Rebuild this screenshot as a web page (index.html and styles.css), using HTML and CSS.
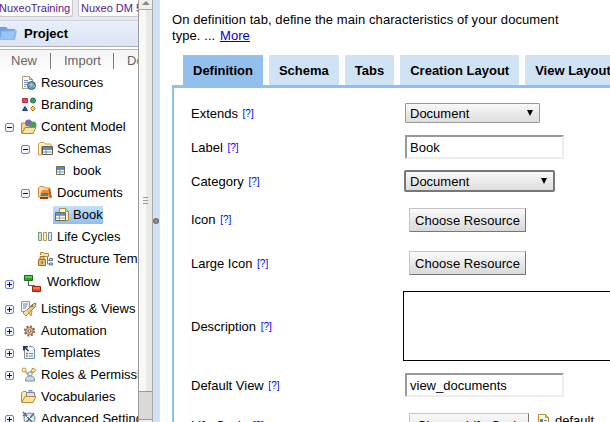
FILE: index.html
```html
<!DOCTYPE html>
<html lang="en">
<head>
<meta charset="utf-8">
<title>Nuxeo Studio</title>
<link rel="stylesheet" href="styles.css">
</head>
<body>
<div class="app">
  <aside class="sidebar">
    <div class="bookmarks"><span class="mark first">NuxeoTraining</span><span class="mark second">Nuxeo DM 5.4</span></div>
    <div class="project">
      <svg width="18" height="16" viewBox="0 0 18 16"><path d="M0 1h6l2 2h7v9H0z" fill="#6f9fdc"/><path d="M1 5l14-1 2 1-2 9H0z" fill="#8bb8ef"/><path d="M2 6l13-1-2 8H1z" fill="#9cc4f4"/></svg>
      <span>Project</span>
    </div>
    <div class="toolbar"><span class="tool new">New</span><span class="tool import">Import</span><span class="tool del">Delete</span></div>
    <ul class="tree">
      <li class="l1"><i class="tog"></i><svg class="ic" viewBox="0 0 16 16"><path d="M1.500 1.500h7l3 3v9h-10z" fill="#fffdf0" stroke="#a6a383"/><path d="M8.500 1.500v3h3M3 5.500h4M3 7.500h4M3 9.500h3M3 11.500h2" fill="none" stroke="#7792bd"/><circle cx="10.500" cy="10.500" r="4" fill="#659cce" stroke="#355c83"/><path d="M8 9l3-1 1 2-2 2zM12 12l2-2v2z" fill="#a9c98d"/></svg><span>Resources</span></li>
      <li class="l1"><i class="tog"></i><svg class="ic" viewBox="0 0 16 16"><path d="M1.500 1.500h5v4h-5z" fill="#e7455d" stroke="#b92e42"/><circle cx="12" cy="3.500" r="2.500" fill="#459a65" stroke="#246942"/><path d="M4 9.500l2.500 4h-5z" fill="#245baf" stroke="#203f72"/><path d="M12 9l2.500 2.500L12 14l-2.500-2.500z" fill="#ffc84e" stroke="#b67e1d"/></svg><span>Branding</span></li>
      <li class="l1"><i class="tog minus"></i><svg class="ic" viewBox="0 0 16 16"><path d="M.5 14V4h4l2 2h6v8z" fill="#f5d488" stroke="#b88637"/><circle cx="7.500" cy="4" r="3.500" fill="#7770a5"/><circle cx="12" cy="6" r="3.500" fill="#4b9b5e"/><path d="M1 14.500l3-6h11l-3 6z" fill="#fae2a5" stroke="#b88637"/></svg><span>Content Model</span></li>
      <li class="l2"><i class="tog minus"></i><svg class="ic" viewBox="0 0 16 16"><path d="M1.500 14V3L3 1.500h4L8.500 3H14v3" fill="#fff2ca" stroke="#d59b43"/><path d="M1.500 14h3V5" fill="none" stroke="#d59b43"/><path d="M5.500 5.500h10v8h-10z" fill="#fff" stroke="#625e46"/><path d="M6 6h9v2H6z" fill="#568bd2"/><path d="M6 8.500h9M6 11h9M9 8v5" stroke="#668fb8"/></svg><span>Schemas</span></li>
      <li class="l3"><svg class="ic" viewBox="0 0 16 16"><path d="M3.500 3.500h8v8h-8z" fill="#fff" stroke="#6e6b4c"/><path d="M4 4h7v2H4z" fill="#518fd1"/><path d="M4 6.500h7M4 9h7M7 6v5" stroke="#7095b9"/></svg><span>book</span></li>
      <li class="l2"><i class="tog minus"></i><svg class="ic" viewBox="0 0 16 16"><path d="M1.500 12V3L3 1.500h3.500L8 3h5v9z" fill="#ffe1a5" stroke="#cf8634"/><path d="M5 5h6l2 6H3z" fill="#f18a32"/><path d="M4 8h7v3H4z" fill="#388996"/><path d="M3 12h8v2H3z" fill="#953b26"/><path d="M12 4l2 9" stroke="#b55a23" stroke-width="2"/></svg><span>Documents</span></li>
      <li class="l3"><span class="selected"><svg class="ic" viewBox="0 0 16 16"><path d="M5.500 6V1.500h6l3 3v9h-4" fill="#fff6cc" stroke="#b49142"/><path d="M11.500 1.500v3h3" fill="none" stroke="#b49142"/><path d="M1.500 5.500h10v8h-10z" fill="#fff" stroke="#6e6d54"/><path d="M2 6h9v2H2z" fill="#5c91d2"/><path d="M2 8.500h9M2 11h9M5.500 8v5" stroke="#8c9eab"/></svg><span>Book</span></span></li>
      <li class="l2"><i class="tog"></i><svg class="ic" viewBox="0 0 16 16"><path d="M1.500 3.500h3v8h-3z" fill="#d5e9ce" stroke="#77996d"/><path d="M6.500 3.500h3v8h-3z" fill="#fff0bc" stroke="#b29a5a"/><path d="M11.500 3.500h3v8h-3z" fill="#dce9fa" stroke="#768eae"/></svg><span>Life Cycles</span></li>
      <li class="l2"><i class="tog"></i><svg class="ic" viewBox="0 0 16 16"><path d="M3.500 4V1.500h3l1 1h4v3h-6" fill="#ffe29a" stroke="#bd8130"/><path d="M1.500 8.500h7v6h-7zM3 8V5.500h4V8" fill="#e8bf73" stroke="#a46c27"/><path d="M5 10v3" stroke="#7b5019"/><path d="M10.500 6v7h3M10 9.500h3" fill="none" stroke="#6a82a6"/><path d="M12.500 7.500h3v2h-3zM12.500 12h3v2h-3z" fill="#d5e4f5" stroke="#55739c"/></svg><span>Structure Templates</span></li>
      <li class="l1 workflow"><i class="tog plus"></i><svg class="flow" width="20" height="20" viewBox="0 0 20 20"><path d="M5.500 7v4.500h6v3" fill="none" stroke="#555"/><path d="M1.500 1.500h8v5h-8z" fill="#27a927" stroke="#176b1b"/><path d="M2 2h7v2H2z" fill="#62c957"/><path d="M9.500 12.500h8v5h-8z" fill="#fa3e20" stroke="#9c2014"/><path d="M10 13h7v2h-7z" fill="#ff7453"/></svg><span>Workflow</span></li>
      <li class="l1"><i class="tog plus"></i><svg class="ic" viewBox="0 0 16 16"><path d="M.5.500h8v10h-8z" fill="#edf4fc" stroke="#8299b5"/><path d="M2 3h5M2 5h4M2 7h3" stroke="#718aad"/><path d="M5 10l7-7 3-1-1 4-6 6z" fill="#f0ca80" stroke="#a88042"/><path d="M5 9l-3 3 3 3 3-3M8 12l2 3 1-5" fill="#f7dca3" stroke="#b38b50"/><circle cx="11" cy="5" r="1.200" fill="#5579ab"/></svg><span>Listings &amp; Views</span></li>
      <li class="l1"><i class="tog plus"></i><svg class="ic" viewBox="0 0 16 16"><circle cx="8.500" cy="8" r="4.600" fill="none" stroke="#866347" stroke-width="2" stroke-dasharray="2 1.600"/><circle cx="8.500" cy="8" r="3.600" fill="#ddc69c" stroke="#9b7552"/><circle cx="8.500" cy="8" r="1.400" fill="#fff" stroke="#806147"/></svg><span>Automation</span></li>
      <li class="l1"><i class="tog plus"></i><svg class="ic" viewBox="0 0 16 16"><path d="M3.500 5V13.500h10v-10L11.500 1.500H8" fill="#f2f6fb" stroke="#7790ad"/><path d="M2 1h5v1.500H5l3 3-1 1-3-3v2H2z" fill="#24364f"/><path d="M5 8.500h2M5 11h2" stroke="#d25c52" stroke-width="1.500"/><path d="M8 8.500h4M8 11h4" stroke="#479d88"/></svg><span>Templates</span></li>
      <li class="l1"><i class="tog plus"></i><svg class="ic" viewBox="0 0 16 16"><circle cx="3" cy="3" r="2" fill="#fff3b2" stroke="#c79835"/><path d="M4.500 4.500L9 10M11 4L6 8" stroke="#c7a14b" stroke-width="1.500"/><path d="M12 1l3 2.500-3 2.500-2-2.500z" fill="#ffe59a" stroke="#bd892c"/><circle cx="9" cy="7" r="2.200" fill="#e5edf5" stroke="#8297b0"/><path d="M4.500 14c0-4 2-5 5-5s4 2 4 5z" fill="#cbdced" stroke="#748fae"/></svg><span>Roles &amp; Permissions</span></li>
      <li class="l1"><i class="tog"></i><svg class="ic" viewBox="0 0 16 16"><path d="M.5 13V4L2 2.500h3L7 4.500h5V13z" fill="#ffe7a9" stroke="#bd8b38"/><path d="M5.500 8V3.500h8V8M8 3V1.500h3V3" fill="#d7e1ef" stroke="#7487a7"/><path d="M1 13.500l3-6h11l-3 6z" fill="#fae4a5" stroke="#bd8b38"/></svg><span>Vocabularies</span></li>
      <li class="l1"><i class="tog plus"></i><svg class="ic" viewBox="0 0 16 16"><circle cx="8.500" cy="7.500" r="5.500" fill="#d9e8f0" stroke="#668296"/><path d="M2 1l10 11M13 2L5 12M5 2l-3 3" stroke="#516d84" stroke-width="1.500"/><path d="M4 8l3-3 5 5" fill="none" stroke="#fff"/></svg><span>Advanced Settings</span></li>
    </ul>
  </aside>
  <div class="scrollbar"><div class="up"></div><div class="thumb"><b></b></div><div class="track"></div><div class="down"></div></div>
  <div class="splitter"><i></i></div>
  <main class="content">
    <p class="intro">On definition tab, define the main characteristics of your document<br>type. ... <a href="#">More</a></p>
    <nav class="tabs"><span class="tab active">Definition</span><span class="tab">Schema</span><span class="tab">Tabs</span><span class="tab">Creation Layout</span><span class="tab">View Layout</span></nav>
    <section class="panel">
      <div class="row"><label>Extends <a>[?]</a></label><div class="select">Document<i></i></div></div>
      <div class="row"><label>Label <a>[?]</a></label><div class="input">Book</div></div>
      <div class="row"><label>Category <a>[?]</a></label><div class="select focus">Document<i></i></div></div>
      <div class="row icon"><label>Icon <a>[?]</a></label><div class="button">Choose Resource</div></div>
      <div class="row large"><label>Large Icon <a>[?]</a></label><div class="button">Choose Resource</div></div>
      <div class="row desc"><label>Description <a>[?]</a></label><div class="textarea"></div></div>
      <div class="row view"><label>Default View <a>[?]</a></label><div class="input">view_documents</div></div>
      <div class="row cycle"><label>Life Cycle <a>[?]</a></label><div class="button wide">Choose Life Cycle</div><div class="current"><svg width="12" height="14" viewBox="0 0 12 14"><path d="M.5.500h7l3 3v10H.5z" fill="#fff8dc" stroke="#b5933d"/><path d="M7.500.5v3h3" fill="#ecc76e" stroke="#b5933d"/><path d="M2 5h3v3H2zM2 10h3v2H2z" fill="#5680c0"/><path d="M6 6.500h3M6 11h3" stroke="#6d87ae"/></svg><span>default</span></div></div>
    </section>
  </main>
</div>
</body>
</html>
```
FILE: styles.css
```css
* { box-sizing: border-box; }
body { margin: 0; overflow: hidden; background: #fff; color: #000; font: 13px/16px "Liberation Sans", Arial, sans-serif; }
.app { display: flex; width: 610px; height: 422px; overflow: hidden; }
svg { flex: none; display: block; }

.sidebar { width: 138px; flex: none; overflow: hidden; white-space: nowrap; }
.bookmarks { display: flex; gap: 5px; height: 21px; background: #e9eaf0; font-size: 11px; color: #551a8b; border-bottom: 1px solid #d4d4da; }
.mark { height: 17px; background: #fff; border: 1px solid #c8c8d4; border-top: 0; border-radius: 0 0 3px 3px; flex: none; }
.mark.first { width: 74px; margin-left: -1px; text-indent: -1px; }
.mark.second { width: 80px; padding-left: 2px; }
.project { display: flex; align-items: center; height: 26px; background: linear-gradient(#e9effb, #dbe4f5); border-bottom: 1px solid #b0b0b5; font-weight: bold; }
.project span { margin: 1px 0 0 6px; }
.toolbar { display: flex; align-items: center; height: 25px; margin-top: 2px; padding-bottom: 2px; border-top: 1px solid #b4b4b4; background: linear-gradient(#f4f4f4, #fff); color: #666; }
.tool { height: 16px; flex: none; }
.tool.new { width: 51px; padding-left: 11px; border-right: 1px solid #777; }
.tool.import { width: 63px; padding-left: 13px; border-right: 1px solid #777; }
.tool.del { padding-left: 13px; }

.tree { list-style: none; margin: -2px 0 0; padding: 0; }
.tree li { display: flex; align-items: center; height: 22px; }
.tree .l1 { padding-left: 5px; }
.tree .l2 { padding-left: 21px; }
.tree .l3 { padding-left: 53px; }
.tog { width: 9px; height: 9px; margin-right: 7px; flex: none; }
.tog.minus, .tog.plus { border: 1px solid #7186bd; border-radius: 2px; background: linear-gradient(#0000c8, #0000c8) center / 5px 1px no-repeat, #eef3ff; }
.tog.plus { background: linear-gradient(#0000c8, #0000c8) center / 5px 1px no-repeat, linear-gradient(#0000c8, #0000c8) center / 1px 5px no-repeat, #eef3ff; }
.ic { width: 16px; height: 16px; margin-right: 4px; }
.selected { display: flex; align-items: center; width: 50px; height: 18px; padding-left: 1px; background: linear-gradient(#c5e0fb, #91beee); }
.selected .ic { margin-right: 3px; }
.tree .workflow { height: 28px; }
.workflow .flow { margin: 0 3px 0 2px; }
.workflow span { margin: 0 0 5px 1px; }

.scrollbar { display: flex; flex-direction: column; width: 15px; flex: none; border-left: 1px solid #9b9b9b; border-right: 1px solid #aaa; background: #ddd; }
.up { height: 10px; border-bottom: 1px solid #aaa; background: #f1f0ee; }
.up::before { content: ""; display: block; width: 0; margin: 1px 0 0 3px; border: 4px solid transparent; border-top: 0; border-bottom-color: #888; }
.thumb { display: flex; justify-content: center; align-items: center; height: 381px; padding-right: 1px; background: linear-gradient(90deg, #f8f8f7 50%, #ebe9e8 50%); }
.thumb b { width: 5px; height: 7px; border: solid #999; border-width: 1px 0; background: linear-gradient(#999, #999) center / 5px 1px no-repeat; }
.track { height: 29px; border: solid #999; border-width: 1px 0; background: #dcdad9; }
.down { flex: 1; background: #f1f0ee; }
.splitter { display: flex; align-items: center; width: 7px; flex: none; background: #d0e3f5; }
.splitter i { width: 6px; height: 6px; margin-top: 20px; border-radius: 50%; background: radial-gradient(#999, #555); }

.content { flex: none; width: 500px; padding-left: 12px; white-space: nowrap; }
.intro { height: 55px; margin: 0; padding-top: 12px; letter-spacing: .075px; }
.intro a { margin-left: 1px; color: #0000cd; text-decoration: underline; }
.tabs { display: flex; gap: 6px; padding-left: 11px; height: 30px; font-weight: bold; }
.tab { padding: 8px 10px 0; background: #d0e3f5; }
.tab.active { background: #92bfee; }
.panel { border: solid #92bfee; border-width: 3px 0 0 2px; padding: 8px 0 0 17px; height: 360px; }
.row { display: flex; align-items: center; height: 34px; }
.row label { width: 214px; flex: none; padding-top: 2px; }
.row label a { margin-left: 1px; color: #00f; font-size: 10px; position: relative; top: -1px; }
.select { display: flex; align-items: center; width: 135px; height: 20px; padding: 1px 5px 0 4px; border: 1px solid #999; border-radius: 1px; background: linear-gradient(#f8f8f8, #ddd); }
.select i { margin: -1px 1px 0 auto; border: solid transparent; border-width: 6px 3px 0; border-top-color: #000; }
.select.focus { width: 151px; height: 22px; margin-left: -1px; border: 2px solid #777; border-radius: 2px; }
.input { width: 159px; height: 24px; padding: 3px 3px 0; border: 2px solid; border-color: #999 #eee #eee #999; }
.button { width: 117px; height: 24px; margin-left: 4px; padding: 4px 5px; border: 1px solid; border-color: #c5c5c5 #777 #777 #c5c5c5; background: linear-gradient(#fafafa, #d9d9d9); letter-spacing: .06px; }
.button.wide { width: 120px; padding-left: 7px; flex: none; }
.row.icon { height: 43px; }
.row.large { height: 44px; }
.row.desc { height: 82px; }
.textarea { width: 230px; height: 70px; margin-left: -2px; border: 1px solid #000; }
.row.view { height: 36px; }
.row.cycle { height: 44px; }
.current { display: flex; align-items: center; gap: 5px; margin: 0 0 8px 9px; }
```
